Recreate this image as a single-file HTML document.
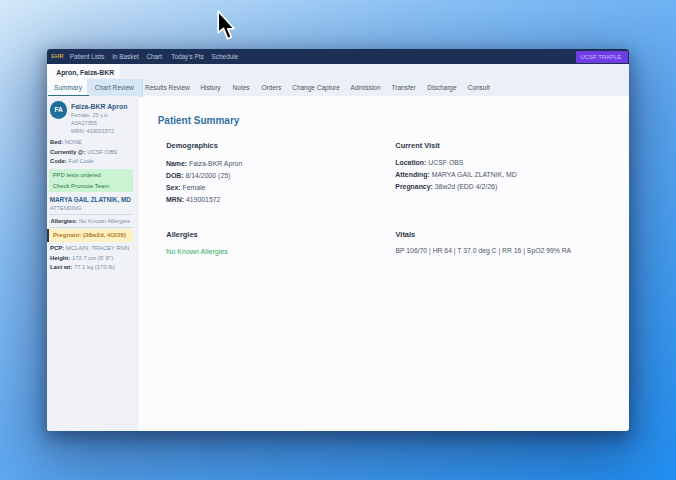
<!DOCTYPE html>
<html><head><meta charset="utf-8">
<style>
*{margin:0;padding:0;box-sizing:border-box}
html,body{width:676px;height:480px;overflow:hidden}
body{position:relative;font-family:"Liberation Sans",sans-serif;
background:linear-gradient(150deg,#d4e8f8 0%,#b4d7f7 12%,#88c0f5 30%,#66adf2 50%,#2090f4 100%);}
.t{position:absolute;white-space:nowrap;line-height:1}
#win{position:absolute;left:47px;top:49px;width:582px;height:382px;border-radius:3px;overflow:hidden;
background:#fcfcfe;box-shadow:0 20px 60px 10px rgba(15,30,70,0.45),0 6px 16px 2px rgba(10,25,60,0.4)}
#nav{position:absolute;left:0;top:0;width:582px;height:14.6px;z-index:1;background:#1c3056}
#nav .t{color:#b8c4da;font-size:6.4px;top:4.7px}
#badge{position:absolute;left:529.4px;top:2.2px;width:51.2px;height:11.8px;background:#6d3ee6;border-radius:1px}
#hdr{position:absolute;left:0;top:14.3px;width:582px;height:33px;background:#ebf0f8}
#ptab{position:absolute;left:0;top:0;width:73px;height:14.7px;background:#fbfbfd}
#tabs .t{font-size:6.5px;color:#4a5568;top:35.8px}
#sum{position:absolute;left:0.5px;top:14.7px;width:39px;height:17.6px;background:#fafbfd}
#ul{position:absolute;left:0.5px;top:31.8px;width:41.5px;height:1px;background:#2f6f86}
#cr{position:absolute;left:39.6px;top:15.9px;width:56.6px;height:17.6px;background:#d6e6f5;border-right:1px solid #c6d4e4}
#side{position:absolute;left:0;top:47px;width:91px;height:335px;background:#f0f2f8;border-right:1px solid #e6eaf2}
.sd{font-size:5.9px;color:#3c4a5c}
.sd b{color:#2d3748}
.sv{color:#8090a6}
#avatar{position:absolute;left:2.7px;top:52.2px;width:17.7px;height:17.7px;border-radius:50%;background:#1f6f9a;color:#fff;font-size:6.5px;font-weight:bold;text-align:center;line-height:17.7px}
#green{position:absolute;left:2.3px;top:119.7px;width:84px;height:23.6px;background:#c9f3d3;border-radius:1px}
#preg{position:absolute;left:0;top:180.2px;width:86px;height:12.6px;background:#fdf1c4;border-left:2.2px solid #2d3748}
.hr{position:absolute;left:2.5px;width:83px;height:0.6px;background:#d5dbe6}
.h3{font-size:7.45px;font-weight:bold;color:#2d3748}
.f{font-size:6.9px;color:#4a5568}
.f b{color:#2d3748}
</style></head><body>
<div id="win">
  <div id="nav">
    <span class="t" style="left:4.2px;top:4.9px;color:#c2a850;font-weight:bold;font-size:5.9px">EHR</span>
    <span class="t" style="left:22.7px">Patient Lists</span>
    <span class="t" style="left:65.2px">In Basket</span>
    <span class="t" style="left:99.4px">Chart</span>
    <span class="t" style="left:124.2px">Today's Pts</span>
    <span class="t" style="left:164.6px">Schedule</span>
    <div id="badge"></div>
    <span class="t" style="left:533.5px;color:#cdb6ff;font-size:5.95px;top:5.7px">UCSF TRAPLE</span>
  </div>
  <div id="hdr">
    <div id="ptab"></div>
    <span class="t" style="left:9.3px;top:6.6px;font-size:6.8px;color:#2d3748;font-weight:bold">Apron, Faiza-BKR</span>
    <div id="sum"></div>
    <div id="cr"></div>
    <div id="ul"></div>
  </div>
  <div id="tabs">
    <span class="t" style="left:7.1px;top:35.6px;color:#2f6a8a">Summary</span>
    <span class="t" style="left:47.8px;top:35.6px;color:#4f6580">Chart Review</span>
    <span class="t" style="left:98px">Results Review</span>
    <span class="t" style="left:153.4px">History</span>
    <span class="t" style="left:185.6px">Notes</span>
    <span class="t" style="left:214.4px">Orders</span>
    <span class="t" style="left:245.2px">Change Capture</span>
    <span class="t" style="left:303.6px">Admission</span>
    <span class="t" style="left:344.6px">Transfer</span>
    <span class="t" style="left:380.3px">Discharge</span>
    <span class="t" style="left:420.7px">Consult</span>
  </div>
  <div id="side"></div>
  <div id="avatar">FA</div>
  <span class="t" style="left:24.1px;top:54.9px;font-size:6.88px;font-weight:bold;color:#35587e">Faiza-BKR Apron</span>
  <span class="t sv" style="left:24px;top:64.2px;font-size:5.5px">Female, 25 y.o.</span>
  <span class="t sv" style="left:24px;top:71.6px;font-size:5.5px">A3A27355</span>
  <span class="t sv" style="left:24px;top:79.7px;font-size:5.5px">MRN: 419001572</span>
  <span class="t sd" style="left:3px;top:91.4px"><b>Bed:</b> <span class="sv">NONE</span></span>
  <span class="t sd" style="left:3px;top:100.8px"><b>Currently @:</b> <span class="sv">UCSF OBS</span></span>
  <span class="t sd" style="left:3px;top:109.6px"><b>Code:</b> <span class="sv">Full Code</span></span>
  <div id="green"></div>
  <span class="t" style="left:5.7px;top:124px;font-size:5.9px;color:#2f7a43">PPD tests ordered</span>
  <span class="t" style="left:5.7px;top:135px;font-size:5.9px;color:#2f7a43">Check Promote Team</span>
  <span class="t" style="left:2.7px;top:148.3px;font-size:6.38px;font-weight:bold;color:#2f5e8c">MARYA GAIL ZLATNIK, MD</span>
  <span class="t sv" style="left:3px;top:157.2px;font-size:5.5px">ATTENDING</span>
  <div class="hr" style="top:165px"></div>
  <span class="t sd" style="left:3.4px;top:170px"><b>Allergies:</b> <span class="sv">No Known Allergies</span></span>
  <div class="hr" style="top:177.5px"></div>
  <div id="preg"></div>
  <span class="t" style="left:5.9px;top:182.7px;font-size:6.1px;font-weight:bold;color:#b7791f">Pregnant: (38w2d, 4/2/26)</span>
  <span class="t sd" style="left:3px;top:197.3px"><b>PCP:</b> <span class="sv">MCLAIN, TRACEY RNN</span></span>
  <span class="t sd" style="left:3px;top:206.7px"><b>Height:</b> <span class="sv">172.7 cm (5' 8")</span></span>
  <span class="t sd" style="left:3px;top:215.9px"><b>Last wt:</b> <span class="sv">77.1 kg (170 lb)</span></span>

  <span class="t" style="left:110.7px;top:66.9px;font-size:10px;font-weight:bold;color:#3470a5">Patient Summary</span>
  <span class="t h3" style="left:119.2px;top:92.5px">Demographics</span>
  <span class="t f" style="left:119px;top:112px"><b>Name:</b> Faiza-BKR Apron</span>
  <span class="t f" style="left:119px;top:123.8px"><b>DOB:</b> 8/14/2000 (25)</span>
  <span class="t f" style="left:119px;top:136.3px"><b>Sex:</b> Female</span>
  <span class="t f" style="left:119px;top:148.3px"><b>MRN:</b> 419001572</span>
  <span class="t h3" style="left:119.3px;top:181.5px">Allergies</span>
  <span class="t f" style="left:119.3px;top:199.8px;font-size:7.1px;color:#35ad68">No Known Allergies</span>

  <span class="t h3" style="left:348.3px;top:92.7px">Current Visit</span>
  <span class="t f" style="left:348.3px;top:111.2px"><b>Location:</b> UCSF OBS</span>
  <span class="t f" style="left:348.3px;top:123.2px"><b>Attending:</b> MARYA GAIL ZLATNIK, MD</span>
  <span class="t f" style="left:348.3px;top:135px"><b>Pregnancy:</b> 38w2d (EDD 4/2/26)</span>
  <span class="t h3" style="left:348.5px;top:181.6px">Vitals</span>
  <span class="t f" style="left:348.5px;top:198.8px;font-size:6.8px">BP 106/70 | HR 64 | T 37.0 deg C | RR 16 | SpO2 99% RA</span>
</div>
<svg style="position:absolute;left:215.3px;top:7.9px" width="24" height="35" viewBox="0 0 24 35"><path d="M3.2 3.2 L3.2 24.6 L8.4 20.4 L12.6 30.6 L16.4 29.1 L12.8 20.9 L19 20.5 Z" fill="#000" stroke="#fff" stroke-width="1.7" stroke-linejoin="round"/></svg>
</body></html>
